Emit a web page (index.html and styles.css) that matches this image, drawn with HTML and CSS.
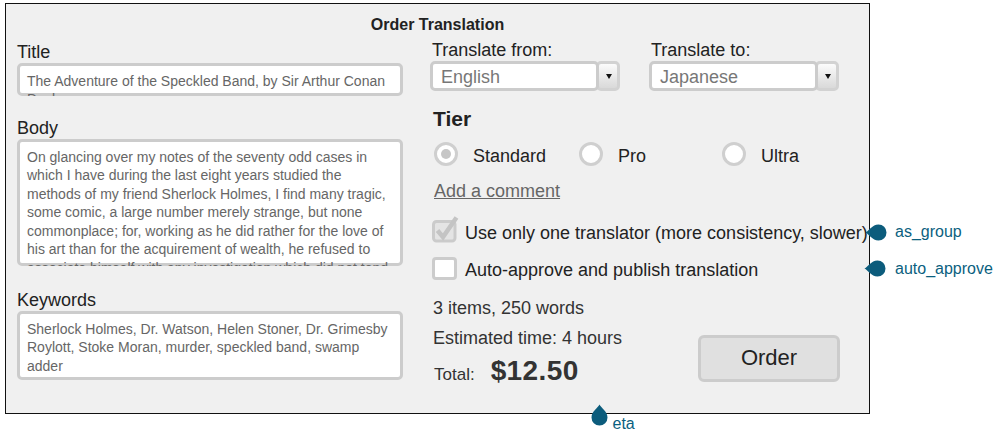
FILE: index.html
```html
<!DOCTYPE html>
<html lang="en">
<head>
<meta charset="utf-8">
<title>Order Translation</title>
<link rel="stylesheet" href="styles.css">
</head>
<body>
<div class="panel">
  <div class="panel-title">Order Translation</div>
  <div class="columns">
    <div class="col-left">
      <div class="field-label">Title</div>
      <div class="textbox title-box">The Adventure of the Speckled Band, by Sir Arthur Conan Doyle</div>
      <div class="field-label body-label">Body</div>
      <div class="textbox body-box">On glancing over my notes of the seventy odd cases in which I have during the last eight years studied the methods of my friend Sherlock Holmes, I find many tragic, some comic, a large number merely strange, but none commonplace; for, working as he did rather for the love of his art than for the acquirement of wealth, he refused to associate himself with any investigation which did not tend towards the unusual, and even the fantastic.</div>
      <div class="field-label kw-label">Keywords</div>
      <div class="textbox kw-box">Sherlock Holmes, Dr. Watson, Helen Stoner, Dr. Grimesby Roylott, Stoke Moran, murder, speckled band, swamp adder</div>
    </div>
    <div class="col-right">
      <div class="lang-row">
        <div class="lang-group">
          <div class="lang-label">Translate from:</div>
          <div class="select">
            <div class="select-value">English</div>
            <div class="select-btn"><span class="caret"></span></div>
          </div>
        </div>
        <div class="lang-group">
          <div class="lang-label">Translate to:</div>
          <div class="select">
            <div class="select-value">Japanese</div>
            <div class="select-btn"><span class="caret"></span></div>
          </div>
        </div>
      </div>
      <div class="tier-heading">Tier</div>
      <div class="radio-row">
        <div class="radio-opt"><span class="radio checked"></span><span>Standard</span></div>
        <div class="radio-opt"><span class="radio"></span><span>Pro</span></div>
        <div class="radio-opt"><span class="radio"></span><span>Ultra</span></div>
      </div>
      <a class="comment-link">Add a comment</a>
      <div class="check-row first">
        <span class="check-wrap">
          <svg width="27" height="28" viewBox="0 0 27 28" aria-hidden="true">
            <rect x="1.5" y="6.5" width="21.5" height="19.5" rx="3" fill="#e4e4e4" stroke="#cbcbcb" stroke-width="3"/>
            <polyline points="5.5,15.5 11,22 24.5,2.5" fill="none" stroke="#c4c4c4" stroke-width="4.5"/>
          </svg>
        </span>
        <span>Use only one translator (more consistency, slower)</span>
      </div>
      <div class="check-row second">
        <span class="check-wrap"><span class="checkbox-empty"></span></span>
        <span>Auto-approve and publish translation</span>
      </div>
      <div class="summary">
        <div class="summary-text">
          <div class="summary-line">3 items, 250 words</div>
          <div class="summary-line eta-line">Estimated time: 4 hours</div>
          <div class="total-line"><span class="total-label">Total:</span><span class="total-amount">$12.50</span></div>
        </div>
        <button class="order-btn">Order</button>
      </div>
    </div>
  </div>
</div>

<svg class="marker m-as-group" width="22" height="17" viewBox="0 0 22 17" aria-hidden="true"><path d="M0.5 8.5 C4 7 7 0.5 13.5 0.5 A8 8 0 1 1 13.5 16.5 C7 16.5 4 10 0.5 8.5 Z"/></svg>
<div class="note n-as-group">as_group</div>
<svg class="marker m-auto" width="22" height="17" viewBox="0 0 22 17" aria-hidden="true"><path d="M0.5 8.5 C4 7 7 0.5 13.5 0.5 A8 8 0 1 1 13.5 16.5 C7 16.5 4 10 0.5 8.5 Z"/></svg>
<div class="note n-auto">auto_approve</div>
<svg class="marker m-eta" width="17" height="22" viewBox="0 0 17 22" aria-hidden="true"><path d="M8.5 0.5 C10 4 16.5 7 16.5 13.5 A8 8 0 1 1 0.5 13.5 C0.5 7 7 4 8.5 0.5 Z"/></svg>
<div class="note n-eta">eta</div>
</body>
</html>
```

FILE: styles.css
```css
* {
  box-sizing: border-box;
}

body {
  margin: 0;
  width: 997px;
  height: 434px;
  position: relative;
  overflow: hidden;
  background: #fff;
  font-family: "Liberation Sans", Arial, Helvetica, sans-serif;
  color: #222;
}

.panel {
  margin: 3px 0 0 5px;
  width: 865px;
  height: 411px;
  border: 1px solid #111;
  background: #f0f0f0;
  padding: 11px 0 0 11px;
}

.panel-title {
  margin-left: -11px;
  font-size: 16px;
  font-weight: bold;
  line-height: 19px;
  text-align: center;
}

.columns {
  display: grid;
  grid-template-columns: 386px 1fr;
  column-gap: 28px;
}

/* left column */
.col-left {
  padding-top: 8px;
  display: flex;
  flex-direction: column;
}

.field-label {
  font-size: 18px;
  line-height: 21px;
}

.body-label {
  margin-top: 22px;
}

.kw-label {
  margin-top: 24px;
}

.textbox {
  background: #fff;
  border: 3px solid #ccc;
  border-radius: 5px;
  padding: 5.5px 5px 0 7px;
  font-size: 14px;
  line-height: 18.6px;
  color: #666;
  overflow: clip;
  overflow-clip-margin: 3px;
}

.title-box {
  height: 33px;
}

.body-box {
  height: 127px;
}

.kw-box {
  height: 69px;
}

/* right column */
.col-right {
  padding-top: 6px;
  display: flex;
  flex-direction: column;
  align-items: flex-start;
}

.lang-row {
  display: flex;
  gap: 29px;
  margin-left: -1px;
}

.lang-group {
  width: 190px;
}

.lang-label {
  margin-left: 2px;
  font-size: 18px;
  line-height: 21px;
}

.select {
  display: flex;
  height: 30px;
}

.select-value {
  position: relative;
  z-index: 1;
  flex: 1;
  background: #fff;
  border: 3px solid #ccc;
  border-radius: 5px;
  padding-left: 8px;
  font-size: 18px;
  line-height: 26px;
  color: #777;
}

.select-btn {
  width: 24px;
  margin-left: -3px;
  border: 3px solid #d2d2d2;
  border-radius: 5px;
  background: linear-gradient(#fbfbfb, #d9d9d9);
  display: flex;
  align-items: center;
  justify-content: center;
  padding-left: 2px;
}

.caret {
  width: 0;
  height: 0;
  border-left: 3.5px solid transparent;
  border-right: 3.5px solid transparent;
  border-top: 5px solid #111;
}

.tier-heading {
  margin-top: 15px;
  margin-left: 2px;
  font-size: 21px;
  font-weight: bold;
  line-height: 25px;
}

.radio-row {
  margin-top: 11px;
  margin-left: 3px;
  display: grid;
  grid-template-columns: 145px 143px auto;
}

.radio-opt {
  display: flex;
  align-items: flex-start;
  gap: 15px;
  font-size: 18px;
  line-height: 28px;
}

.radio {
  flex: none;
  width: 24px;
  height: 24px;
  border-radius: 50%;
  border: 3px solid #cfcfcf;
  background: #fff;
  display: flex;
  align-items: center;
  justify-content: center;
}

.radio.checked::after {
  content: "";
  width: 10px;
  height: 10px;
  border-radius: 50%;
  background: #c6c6c6;
}

.comment-link {
  margin-top: 11px;
  margin-left: 3px;
  font-size: 18px;
  line-height: 21px;
  color: #666;
  text-decoration: underline;
}

.check-row {
  display: flex;
  align-items: flex-start;
  margin-left: 1px;
  font-size: 18px;
  line-height: 26px;
  white-space: nowrap;
}

.check-row.first {
  margin-top: 18px;
}

.check-row.second {
  margin-top: 11px;
}

.check-wrap {
  flex: none;
  width: 33px;
}

.check-wrap svg {
  display: block;
  margin-top: -5px;
}

.checkbox-empty {
  display: block;
  width: 24.5px;
  height: 22.5px;
  border: 3px solid #ccc;
  border-radius: 4px;
  background: #fff;
}

.summary {
  margin-top: 15px;
  margin-left: 2px;
  width: 436px;
  padding-right: 29px;
  display: flex;
  justify-content: space-between;
  align-items: flex-end;
}

.summary-line {
  font-size: 18px;
  line-height: 21px;
  color: #333;
}

.eta-line {
  margin-top: 9px;
}

.total-line {
  margin-top: 6px;
  height: 32px;
  line-height: 32px;
  display: flex;
  align-items: baseline;
  color: #333;
}

.total-label {
  font-size: 17px;
  margin-left: 1px;
}

.total-amount {
  margin-left: 16px;
  font-size: 28px;
  font-weight: bold;
  letter-spacing: 0.4px;
}

.order-btn {
  width: 142px;
  height: 47px;
  margin-bottom: 5.5px;
  padding: 0;
  border: 3px solid #ccc;
  border-radius: 6px;
  background: #e0e0e0;
  font-family: inherit;
  font-size: 22px;
  color: #222;
}

/* annotations */
.marker {
  position: absolute;
  fill: #0c5c7c;
}

.m-as-group {
  left: 864.5px;
  top: 224px;
}

.m-auto {
  left: 863.5px;
  top: 260px;
}

.m-eta {
  left: 590.5px;
  top: 403.5px;
}

.note {
  position: absolute;
  font-size: 16px;
  line-height: 19px;
  color: #0b5f80;
  white-space: nowrap;
}

.n-as-group {
  left: 895px;
  top: 222px;
}

.n-auto {
  left: 895px;
  top: 259px;
}

.n-eta {
  left: 612.5px;
  top: 413.5px;
}
```
